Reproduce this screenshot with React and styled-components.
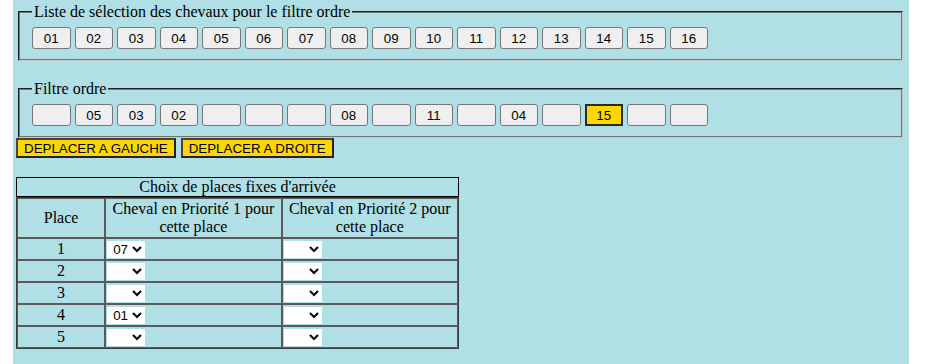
import React, { useState } from 'react';
import styled, { createGlobalStyle } from 'styled-components';

const GlobalStyle = createGlobalStyle`
  body {
    margin: 0;
    background: #ffffff;
    font-family: 'Liberation Serif', 'Times New Roman', serif;
  }
`;

const chevaux = ['01', '02', '03', '04', '05', '06', '07', '08', '09', '10', '11', '12', '13', '14', '15', '16'];
const ordreInitial = ['', '05', '03', '02', '', '', '', '08', '', '11', '', '04', '', '15', '', ''];
const placesInitiales = [
  { place: 1, p1: '07', p2: '' },
  { place: 2, p1: '', p2: '' },
  { place: 3, p1: '', p2: '' },
  { place: 4, p1: '01', p2: '' },
  { place: 5, p1: '', p2: '' },
];

const Page = styled.div`
  margin-left: 13px;
  width: 896px;
  box-sizing: border-box;
  padding: 3px 4px 16px 3px;
  background-color: #b0dfe5;
  color: #000;
  font-size: 16px;
`;

const Groupe = styled.fieldset`
  margin: ${(p) => (p.$second ? '19px 2px 0' : '0 2px')};
  padding: 5px 12px 10px 12px;
  border-color: #767676 #c8c8c8 #c8c8c8 #767676;
  border-width: 2px;
  border-style: groove;
`;

const Legende = styled.legend`
  padding: 0 2px;
  font-size: 16px;
  line-height: 18px;
`;

const Rangee = styled.div`
  display: flex;
  gap: 4px;
  padding-top: 1px;
`;

const Case = styled.button`
  width: 38.5px;
  height: 22px;
  padding: 0;
  box-sizing: border-box;
  font-family: 'Liberation Sans', Arial, sans-serif;
  font-size: 13.33px;
  color: #000;
  background-color: ${(p) => (p.$actif ? '#ffd700' : '#efefef')};
  border: ${(p) => (p.$actif ? '2px solid #2b2b2b' : '1px solid #767676')};
  border-radius: ${(p) => (p.$actif ? '0' : '3px')};
  cursor: pointer;
`;

const Actions = styled.div`
  display: flex;
  gap: 5px;
`;

const BoutonJaune = styled.button`
  height: 20px;
  padding: 0 6px;
  box-sizing: border-box;
  font-family: 'Liberation Sans', Arial, sans-serif;
  font-size: 13.33px;
  color: #000;
  background-color: #ffd700;
  border: 2px solid #444;
  border-right-color: #222;
  border-bottom-color: #222;
  cursor: pointer;
`;

const Tableau = styled.table`
  margin-top: 19px;
  width: 443px;
  border-collapse: separate;
  border-spacing: 0;
  border: 1px solid #3c3c3c;
  font-size: 16px;
`;

const Titre = styled.caption`
  border: 1px solid #000;
  height: 18px;
  line-height: 18px;
  text-align: center;
`;

const Entete = styled.th`
  font-weight: normal;
  border: 1px solid #5a5a5a;
  padding: 1px;
  height: 36px;
  line-height: 18px;
  width: ${(p) => p.$w};
`;

const Cellule = styled.td`
  border: 1px solid #5a5a5a;
  padding: 1px;
  height: 18px;
  line-height: 16px;
  text-align: ${(p) => (p.$centre ? 'center' : 'left')};
`;

const Choix = styled.select`
  display: block;
  width: 38px;
  height: 17px;
  border: none;
  border-radius: 0;
  padding: 0 0 0 2px;
  background-color: #fff;
  font-family: 'Liberation Sans', Arial, sans-serif;
  font-size: 13.33px;
  color: #000;
  outline: none;
`;

const Options = () => (
  <>
    <option value=""></option>
    {chevaux.map((c) => (
      <option key={c} value={c}>
        {c}
      </option>
    ))}
  </>
);

export default function App() {
  const [ordre] = useState(ordreInitial);
  const [actif, setActif] = useState(13);
  const [places, setPlaces] = useState(placesInitiales);

  const changer = (i, champ, val) => {
    setPlaces(places.map((p, j) => (j === i ? { ...p, [champ]: val } : p)));
  };

  return (
    <>
      <GlobalStyle />
      <Page>
        <Groupe>
          <Legende>Liste de sélection des chevaux pour le filtre ordre</Legende>
          <Rangee>
            {chevaux.map((c) => (
              <Case key={c}>{c}</Case>
            ))}
          </Rangee>
        </Groupe>

        <Groupe $second>
          <Legende>Filtre ordre</Legende>
          <Rangee>
            {ordre.map((c, i) => (
              <Case key={i} $actif={i === actif} onClick={() => setActif(i)}>
                {c}
              </Case>
            ))}
          </Rangee>
        </Groupe>

        <Actions>
          <BoutonJaune>DEPLACER A GAUCHE</BoutonJaune>
          <BoutonJaune>DEPLACER A DROITE</BoutonJaune>
        </Actions>

        <Tableau>
          <Titre>Choix de places fixes d'arrivée</Titre>
          <thead>
            <tr>
              <Entete $w="20%">Place</Entete>
              <Entete $w="40%">Cheval en Priorité 1 pour cette place</Entete>
              <Entete $w="40%">Cheval en Priorité 2 pour cette place</Entete>
            </tr>
          </thead>
          <tbody>
            {places.map((p, i) => (
              <tr key={p.place}>
                <Cellule $centre>{p.place}</Cellule>
                <Cellule>
                  <Choix value={p.p1} onChange={(e) => changer(i, 'p1', e.target.value)}>
                    <Options />
                  </Choix>
                </Cellule>
                <Cellule>
                  <Choix value={p.p2} onChange={(e) => changer(i, 'p2', e.target.value)}>
                    <Options />
                  </Choix>
                </Cellule>
              </tr>
            ))}
          </tbody>
        </Tableau>
      </Page>
    </>
  );
}
